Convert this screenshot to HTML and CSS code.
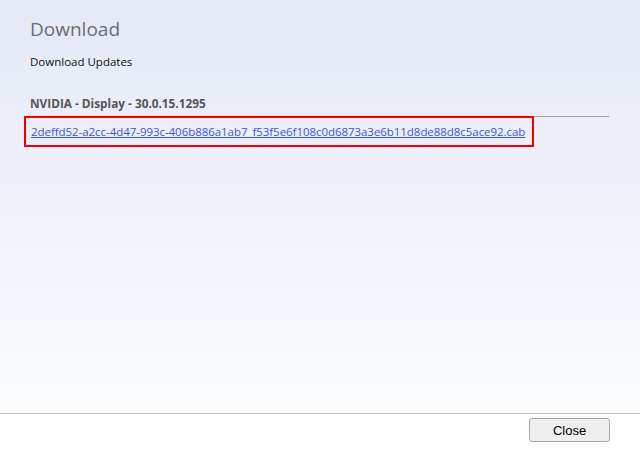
FILE: index.html
```html
<!DOCTYPE html>
<html>
<head>
<meta charset="utf-8">
<link rel="stylesheet" href="styles.css">
</head>
<body>
<div class="dialog">
  <main class="content">
    <h1 class="title">Download</h1>
    <p class="subtitle">Download Updates</p>
    <section class="item">
      <h2 class="item-name">NVIDIA - Display - 30.0.15.1295</h2>
      <div class="file-box">
        <a class="file-link" href="#">2deffd52-a2cc-4d47-993c-406b886a1ab7_f53f5e6f108c0d6873a3e6b11d8de88d8c5ace92.cab</a>
      </div>
    </section>
  </main>
  <footer class="footer">
    <button class="btn">Close</button>
  </footer>
</div>
</body>
</html>
```

FILE: styles.css
```css
html, body {
  margin: 0;
  padding: 0;
  width: 640px;
  height: 459px;
  overflow: hidden;
}
body {
  font-family: "Open Sans", "Noto Sans", sans-serif;
}
.dialog {
  display: flex;
  flex-direction: column;
  height: 459px;
}
.content {
  flex: 1;
  background: linear-gradient(to bottom, #e4e9f6 0%, #f0f2fa 50%, #fbfcfe 100%);
  padding: 16px 31px 0 30px;
  border-bottom: 1px solid #c9c9c9;
}
.title {
  margin: 0;
  font-size: 19px;
  font-weight: 400;
  color: #6e6e6e;
  line-height: 26px;
}
.subtitle {
  margin: 12px 0 0;
  font-size: 11.5px;
  color: #111;
  line-height: 16px;
}
.item {
  margin-top: 25px;
}
.item-name {
  margin: 0;
  font-size: 11.8px;
  font-weight: 700;
  color: #555;
  line-height: 16px;
  padding-bottom: 5px;
  border-bottom: 1px solid #a0a0a0;
}
.file-box {
  margin: -1px 0 0 -6px;
  width: 501px;
  height: 27px;
  border: 2px solid #ee0000;
  display: flex;
  align-items: center;
  padding-left: 5px;
}
.file-link {
  font-size: 11.5px;
  color: #3a55dd;
  text-decoration: underline;
  letter-spacing: -0.05px;
  white-space: nowrap;
}
.footer {
  height: 45px;
  background: #fdfdfd;
  display: flex;
  justify-content: flex-end;
  align-items: flex-start;
  padding: 4px 30px 0 0;
  box-sizing: border-box;
}
.btn {
  width: 81px;
  height: 24px;
  border: 1px solid #a8a8a8;
  border-radius: 3px;
  background: #efefef;
  font-family: "Liberation Sans", Arial, sans-serif;
  font-size: 13px;
  color: #000;
  padding: 0;
}
```
